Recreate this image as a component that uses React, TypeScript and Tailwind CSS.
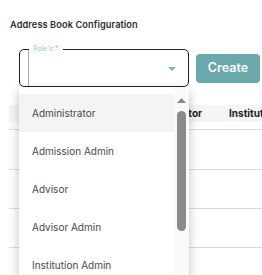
const roles = ["Administrator", "Admission Admin", "Advisor", "Advisor Admin", "Institution Admin", "Instructor"];

export default function App() {
  return (
    <div className="relative h-[275px] w-[262px] overflow-hidden bg-white font-['Inter',sans-serif] text-[#333]">
      <h1 className="pl-[10px] pt-[18px] text-[9.2px] font-semibold leading-[13px] tracking-[0.1px] text-[#2d2d2d]">Address Book Configuration</h1>

      <div className="mt-[18px] flex items-center gap-[7px] pl-[19px]">
        <div className="relative h-[38px] w-[170px] rounded-[5px] border border-[#222]">
          <span className="absolute -top-[6px] left-[9px] bg-white px-[4px] text-[7px] leading-[10px] text-[#9cc7ca]">Role's:*</span>
          <span className="absolute left-[8px] top-0 h-full w-px bg-[#aaa]" />
          <svg className="absolute right-[12px] top-[17px]" width="8" height="4" viewBox="0 0 8 4"><path d="M0 0h8L4 4z" fill="#7fb3b7" /></svg>

          <div className="absolute left-[-1px] top-[37px] z-10 flex h-[200px] w-[170px] bg-white shadow-[0_4px_10px_rgba(0,0,0,0.25)]">
            <ul className="flex-1 pt-[7px]">
              {roles.map((role, i) => (
                <li key={role} className={`flex h-[38px] items-center pl-[13px] text-[10px] text-[#484848] ${i === 0 ? "bg-[#f4f4f4]" : ""}`}>{role}</li>
              ))}
            </ul>
            <div className="flex w-[15px] flex-col items-center bg-[#fafafa] pt-[11px]">
              <svg width="9" height="5" viewBox="0 0 9 5"><path d="M0 5h9L4.5 0z" fill="#8a8a8a" /></svg>
              <div className="mt-[8px] h-[120px] w-[9px] rounded-[5px] bg-[#8a8a8a]" />
            </div>
          </div>
        </div>
        <button className="h-[29px] w-[64px] rounded-[4px] bg-[#6aa8ac] text-[12.5px] font-semibold text-white">Create</button>
      </div>

      <div className="ml-[9px] mt-[18px]">
        <div className="flex h-[17px] items-center whitespace-nowrap bg-[#f5f5f5] text-[10px] font-bold text-[#222]">
          <span className="ml-[126px] w-[94px] shrink-0">Administrator</span>
          <span className="shrink-0">Institution</span>
        </div>
        <div className="mt-[7px] h-[40px] border-t border-[#dcdcdc]" />
        <div className="h-[39px] border-t border-[#dcdcdc]" />
        <div className="h-[39px] border-t border-[#dcdcdc]" />
        <div className="h-[39px] border-t border-[#dcdcdc]" />
      </div>
    </div>
  );
}
